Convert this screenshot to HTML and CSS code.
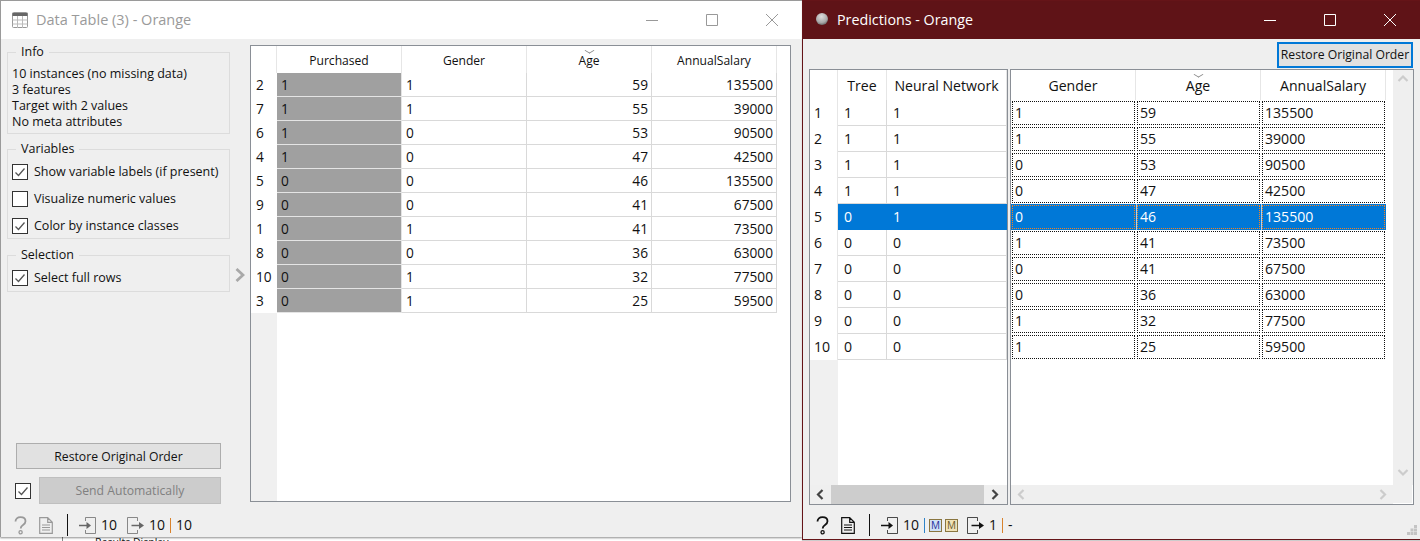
FILE: index.html
```html
<!DOCTYPE html>
<html lang="en">
<head>
    <meta charset="UTF-8">
    <title>Orange</title>
    <link rel="stylesheet" href="styles.css">
</head>
<body>
    <svg class="defs" width="0" height="0">
        <symbol id="i-help" viewBox="0 0 13 19"><path d="M1.500 5.500C1.500 2.800 3.500 1.200 6.500 1.200s5 1.600 5 4.100c0 1.900-1.100 2.800-2.500 3.700-1.500 1-2.300 1.800-2.300 3.600" fill="none" stroke="currentColor" stroke-width="1.800"/><circle cx="6.600" cy="16.300" r="1.600" fill="none" stroke="currentColor" stroke-width="1.300"/></symbol>
        <symbol id="i-doc" viewBox="0 0 14 17"><path d="M.7.700h8l4.600 4.600v11H.7zM8.700.700v4.600h4.600M3 8h8M3 10.500h8M3 13h8" fill="none" stroke="currentColor" stroke-width="1.200"/></symbol>
        <symbol id="i-in" viewBox="0 0 17 17"><path d="M6.500 4V.5h10v16h-10V13" fill="none" stroke="currentColor" opacity=".75"/><path d="M0 8.500h8" stroke="currentColor" stroke-width="1.500"/><path d="M7.500 5L12 8.500 7.500 12z" fill="currentColor"/></symbol>
        <symbol id="i-out" viewBox="0 0 17 17"><path d="M10.500 4V.5H.5v16h10V13" fill="none" stroke="currentColor" opacity=".75"/><path d="M4.500 8.500h8" stroke="currentColor" stroke-width="1.500"/><path d="M12 5l5 3.500-5 3.500z" fill="currentColor"/></symbol>
        <symbol id="i-check" viewBox="0 0 14 14"><path d="M2.500 7.500l3 3 6-7" fill="none" stroke="#555" stroke-width="1.300"/></symbol>
    </svg>

    <!-- what shows of the desktop under the windows -->
    <div class="desktop-line"></div>
    <div class="desktop-label">Results Display</div>

    <!-- Data Table window -->
    <div class="window data-window">
        <div class="titlebar">
            <svg class="app-icon" width="16" height="16" viewBox="0 0 16 16"><rect x=".5" y=".5" width="15" height="15" rx="1" fill="#fff" stroke="#999"/><path d="M.5 1h15v3H.5z" fill="#666"/><path d="M.5 8h15M.5 12h15M5.500 4v12M10.500 4v12" stroke="#bbb"/></svg>
            <span class="title">Data Table (3) - Orange</span>
            <div class="win-buttons">
                <span class="win-btn"><svg width="12" height="12" viewBox="0 0 12 12"><path d="M0 6.500h12" stroke="currentColor"/></svg></span>
                <span class="win-btn"><svg width="12" height="12" viewBox="0 0 12 12"><path d="M.5.500h11v11H.5z" fill="none" stroke="currentColor"/></svg></span>
                <span class="win-btn"><svg width="12" height="12" viewBox="0 0 12 12"><path d="M0 0l12 12M12 0L0 12" stroke="currentColor"/></svg></span>
            </div>
        </div>
        <div class="data-body">
            <div class="sidebar">
                <fieldset class="group group-info">
                    <legend>Info</legend>
                    <div class="info-line">10 instances (no missing data)</div>
                    <div class="info-line">3 features</div>
                    <div class="info-line">Target with 2 values</div>
                    <div class="info-line">No meta attributes</div>
                </fieldset>
                <fieldset class="group group-vars">
                    <legend>Variables</legend>
                    <label class="check"><span class="box"><svg><use href="#i-check"/></svg></span>Show variable labels (if present)</label>
                    <label class="check"><span class="box"></span>Visualize numeric values</label>
                    <label class="check"><span class="box"><svg><use href="#i-check"/></svg></span>Color by instance classes</label>
                </fieldset>
                <fieldset class="group group-sel">
                    <legend>Selection</legend>
                    <label class="check"><span class="box"><svg><use href="#i-check"/></svg></span>Select full rows</label>
                </fieldset>
                <div class="spacer"></div>
                <div class="btn restore">Restore Original Order</div>
                <div class="send-row">
                    <span class="box"><svg><use href="#i-check"/></svg></span>
                    <div class="btn send">Send Automatically</div>
                </div>
            </div>
            <div class="handle"><svg width="10" height="14" viewBox="0 0 10 14"><path d="M1.500 1L8 7l-6.500 6" fill="none" stroke="#a8a8a8" stroke-width="2.800"/></svg></div>
            <div class="table-frame data-frame">
                <table class="grid data-grid">
                    <colgroup><col class="c-rowhead"><col class="c-col"><col class="c-col"><col class="c-col"><col class="c-col"></colgroup>
                    <thead><tr><th></th><th>Purchased</th><th>Gender</th><th class="sorted">Age</th><th>AnnualSalary</th></tr></thead>
                    <tbody>
                        <tr><th>2</th><td class="cls">1</td><td>1</td><td class="num">59</td><td class="num">135500</td></tr>
                        <tr><th>7</th><td class="cls">1</td><td>1</td><td class="num">55</td><td class="num">39000</td></tr>
                        <tr><th>6</th><td class="cls">1</td><td>0</td><td class="num">53</td><td class="num">90500</td></tr>
                        <tr><th>4</th><td class="cls">1</td><td>0</td><td class="num">47</td><td class="num">42500</td></tr>
                        <tr><th>5</th><td class="cls">0</td><td>0</td><td class="num">46</td><td class="num">135500</td></tr>
                        <tr><th>9</th><td class="cls">0</td><td>0</td><td class="num">41</td><td class="num">67500</td></tr>
                        <tr><th>1</th><td class="cls">0</td><td>1</td><td class="num">41</td><td class="num">73500</td></tr>
                        <tr><th>8</th><td class="cls">0</td><td>0</td><td class="num">36</td><td class="num">63000</td></tr>
                        <tr><th>10</th><td class="cls">0</td><td>1</td><td class="num">32</td><td class="num">77500</td></tr>
                        <tr><th>3</th><td class="cls">0</td><td>1</td><td class="num">25</td><td class="num">59500</td></tr>
                    </tbody>
                </table>
                <div class="rowhead-rest"></div>
            </div>
        </div>
        <div class="statusbar inactive">
            <svg class="st-help"><use href="#i-help"/></svg>
            <svg class="st-doc"><use href="#i-doc"/></svg>
            <span class="st-sep"></span>
            <svg class="st-io"><use href="#i-in"/></svg>
            <span class="st-num">10</span>
            <svg class="st-io st-out"><use href="#i-out"/></svg>
            <span class="st-num">10</span>
            <span class="st-bar bar-o"></span>
            <span>10</span>
        </div>
    </div>

    <!-- Predictions window -->
    <div class="window pred-window">
        <div class="titlebar dark">
            <span class="orb"></span>
            <span class="title">Predictions - Orange</span>
            <div class="win-buttons">
                <span class="win-btn"><svg width="12" height="12" viewBox="0 0 12 12"><path d="M0 6.500h12" stroke="currentColor"/></svg></span>
                <span class="win-btn"><svg width="12" height="12" viewBox="0 0 12 12"><path d="M.5.500h11v11H.5z" fill="none" stroke="currentColor"/></svg></span>
                <span class="win-btn"><svg width="12" height="12" viewBox="0 0 12 12"><path d="M0 0l12 12M12 0L0 12" stroke="currentColor"/></svg></span>
            </div>
        </div>
        <div class="pred-top"><div class="btn focus">Restore Original Order</div></div>
        <div class="pred-body">
            <div class="table-frame models-frame">
                <div class="scroll-area">
                    <table class="grid big models-grid">
                        <colgroup><col class="m-rowhead"><col class="m-tree"><col class="m-net"></colgroup>
                        <thead><tr><th></th><th>Tree</th><th>Neural Network</th></tr></thead>
                        <tbody>
                            <tr><th>1</th><td>1</td><td>1</td></tr>
                            <tr><th>2</th><td>1</td><td>1</td></tr>
                            <tr><th>3</th><td>1</td><td>1</td></tr>
                            <tr><th>4</th><td>1</td><td>1</td></tr>
                            <tr class="sel"><th>5</th><td>0</td><td>1</td></tr>
                            <tr><th>6</th><td>0</td><td>0</td></tr>
                            <tr><th>7</th><td>0</td><td>0</td></tr>
                            <tr><th>8</th><td>0</td><td>0</td></tr>
                            <tr><th>9</th><td>0</td><td>0</td></tr>
                            <tr><th>10</th><td>0</td><td>0</td></tr>
                        </tbody>
                    </table>
                    <div class="rowhead-rest big-rest"></div>
                </div>
                <div class="hscroll">
                    <svg class="arrow" width="18" height="19" viewBox="0 0 18 19"><path d="M11 5l-4.500 4.500L11 14" fill="none" stroke="#444" stroke-width="2.200"/></svg>
                    <div class="thumb"></div>
                    <svg class="arrow" width="18" height="19" viewBox="0 0 18 19"><path d="M7 5l4.500 4.500L7 14" fill="none" stroke="#444" stroke-width="2.200"/></svg>
                </div>
            </div>
            <div class="table-frame values-frame">
                <div class="values-main">
                    <div class="scroll-area">
                        <table class="grid big values-grid">
                            <colgroup><col class="v-col"><col class="v-col"><col class="v-col"></colgroup>
                            <thead><tr><th>Gender</th><th class="sorted">Age</th><th>AnnualSalary</th></tr></thead>
                            <tbody>
                                <tr><td><i>1</i></td><td><i>59</i></td><td><i>135500</i></td></tr>
                                <tr><td><i>1</i></td><td><i>55</i></td><td><i>39000</i></td></tr>
                                <tr><td><i>0</i></td><td><i>53</i></td><td><i>90500</i></td></tr>
                                <tr><td><i>0</i></td><td><i>47</i></td><td><i>42500</i></td></tr>
                                <tr class="sel"><td><i>0</i></td><td><i>46</i></td><td><i>135500</i></td></tr>
                                <tr><td><i>1</i></td><td><i>41</i></td><td><i>73500</i></td></tr>
                                <tr><td><i>0</i></td><td><i>41</i></td><td><i>67500</i></td></tr>
                                <tr><td><i>0</i></td><td><i>36</i></td><td><i>63000</i></td></tr>
                                <tr><td><i>1</i></td><td><i>32</i></td><td><i>77500</i></td></tr>
                                <tr><td><i>1</i></td><td><i>25</i></td><td><i>59500</i></td></tr>
                            </tbody>
                        </table>
                    </div>
                    <div class="vscroll">
                        <svg width="18" height="18" viewBox="0 0 18 18"><path d="M4.500 11L9 6.500l4.500 4.500" fill="none" stroke="#ccc" stroke-width="2.200"/></svg>
                        <svg width="18" height="18" viewBox="0 0 18 18"><path d="M4.500 7L9 11.500 13.500 7" fill="none" stroke="#ccc" stroke-width="2.200"/></svg>
                    </div>
                </div>
                <div class="hscroll light">
                    <svg class="arrow" width="18" height="19" viewBox="0 0 18 19"><path d="M11 5l-4.500 4.500L11 14" fill="none" stroke="#ccc" stroke-width="2.200"/></svg>
                    <div class="track"></div>
                    <svg class="arrow" width="18" height="19" viewBox="0 0 18 19"><path d="M7 5l4.500 4.500L7 14" fill="none" stroke="#ccc" stroke-width="2.200"/></svg>
                    <div class="corner"></div>
                </div>
            </div>
        </div>
        <div class="statusbar pred-status">
            <svg class="st-help"><use href="#i-help"/></svg>
            <svg class="st-doc"><use href="#i-doc"/></svg>
            <span class="st-sep"></span>
            <svg class="st-io"><use href="#i-in"/></svg>
            <span class="st-num">10</span>
            <span class="st-bar bar-b"></span>
            <span class="m-badge">M</span>
            <span class="m-badge m-tan">M</span>
            <svg class="st-io st-out pred-out"><use href="#i-out"/></svg>
            <span class="st-num">1</span>
            <span class="st-bar bar-o"></span>
            <span>-</span>
        </div>
        <svg class="grip" width="10" height="10" viewBox="0 0 10 10"><path d="M7 0h3v3H7zM3.500 3.500h3v3h-3zM7 3.500h3v3H7zM0 7h3v3H0zM3.500 7h3v3h-3zM7 7h3v3H7z" fill="#c4c4c4"/></svg>
    </div>
</body>
</html>
```

FILE: styles.css
```css
* {
    box-sizing: border-box;
    margin: 0;
    padding: 0;
}

body {
    width: 1420px;
    height: 541px;
    overflow: hidden;
    position: relative;
    background: #fff;
    font: 12.5px/16px "Open Sans", "Noto Sans", sans-serif;
    color: #111;
}

.defs {
    position: absolute;
}

.desktop-line {
    position: absolute;
    left: 62px;
    top: 530px;
    width: 1px;
    height: 11px;
    background: #888;
}

.desktop-label {
    position: absolute;
    left: 95px;
    top: 534px;
    font-size: 10.5px;
}

/* windows on the desktop */
.window {
    position: absolute;
    top: 0;
    display: flex;
    flex-direction: column;
    background: #efefef;
}

.data-window {
    left: 0;
    width: 802px;
    height: 537px;
    border: 1px solid #9a9a9a;
    border-width: 1px 0 0 1px;
    box-shadow: 0 1px 2px rgba(0, 0, 0, .45);
}

.pred-window {
    left: 802px;
    width: 618px;
    height: 540px;
    border: 1px solid #651418;
    border-right: 0;
    box-shadow: 0 1px 1px rgba(0, 0, 0, .2);
}

.titlebar {
    height: 38px;
    flex: none;
    display: flex;
    align-items: center;
    padding-left: 11px;
    background: #fff;
    color: #9a9a9a;
}

.titlebar.dark {
    background: #5f1317;
    color: #fff;
}

.title {
    font-size: 14.5px;
    margin-left: 8px;
}

.dark .title {
    font-size: 14.300px;
    margin-left: 7px;
}

.orb {
    width: 12px;
    height: 12px;
    margin: -3px 2px 0 2px;
    border-radius: 50%;
    background: radial-gradient(circle at 45% 30%, #ddd, #aaa 55%, #333);
}

.win-buttons {
    margin-left: auto;
    display: flex;
}

.win-btn {
    width: 60px;
    display: flex;
    justify-content: center;
    color: #999;
}

.dark .win-btn {
    color: #fff;
}

/* left window */
.data-body {
    flex: 1;
    display: flex;
    min-height: 0;
}

.sidebar {
    width: 223px;
    margin-left: 6px;
    display: flex;
    flex-direction: column;
    padding-top: 5px;
}

.group {
    border: 1px solid #dcdcdc;
    padding: 0 4px;
}

.group legend {
    margin-left: 4px;
    padding: 0 5px;
    line-height: 16px;
}

.group-info {
    padding-top: 6px;
    padding-bottom: 3px;
}

.group-vars {
    margin-top: 7px;
    height: 98px;
}

.group-sel {
    margin-top: 8px;
    height: 45px;
}

.info-line {
    height: 16px;
}

.check {
    display: flex;
    align-items: center;
    height: 27px;
    gap: 6px;
}

.box {
    width: 16px;
    height: 16px;
    flex: none;
    border: 1px solid #333;
    background: #fff;
}

.box svg {
    display: block;
    width: 14px;
    height: 14px;
}

.group .check:first-of-type {
    margin-top: 1px;
}

.spacer {
    flex: 1;
}

.btn {
    display: flex;
    align-items: center;
    justify-content: center;
    font-size: 12.2px;
    white-space: nowrap;
    background: #e1e1e1;
    border: 1px solid #adadad;
}

.restore {
    margin-left: 9px;
    width: 205px;
    height: 26px;
    flex: none;
    padding-top: 1px;
}

.send-row {
    display: flex;
    align-items: center;
    margin: 8px 0 7px 8px;
}

.send {
    margin-left: 8px;
    width: 182px;
    height: 27px;
    padding-top: 1px;
    background: #ccc;
    border-color: #bfbfbf;
    color: #808080;
}

.handle {
    width: 20px;
    display: flex;
    align-items: flex-start;
    justify-content: center;
    padding-top: 229px;
}

.table-frame {
    border: 1px solid #8a8f96;
    background: #fff;
}

.data-frame {
    width: 541px;
    height: 457px;
    margin-top: 6px;
    display: flex;
    flex-direction: column;
}

.grid {
    border-collapse: separate;
    border-spacing: 0;
    table-layout: fixed;
}

.grid th {
    font-weight: normal;
    text-align: center;
    border-right: 1px solid #e6e6e6;
}

.grid td {
    text-align: left;
    padding: 0 3px;
    border-right: 1px solid #d9d9d9;
    border-bottom: 1px solid #d9d9d9;
}

.grid .num {
    text-align: right;
}

.sorted {
    position: relative;
}

/* small sort chevron over the column title */
.sorted::before {
    content: "";
    position: absolute;
    left: 50%;
    top: 1px;
    width: 6px;
    height: 6px;
    margin-left: -3px;
    border: solid #888;
    border-width: 0 1px 1px 0;
    transform: scaleY(.6) rotate(45deg);
}

.data-grid {
    width: 526px;
    font-size: 13.7px;
}

.c-rowhead {
    width: 26px;
}

.c-col {
    width: 125px;
}

.data-grid thead th {
    height: 27px;
    font-size: 12.1px;
    padding-top: 2px;
}

.data-grid tbody th {
    height: 24px;
    background: #fff;
    text-align: left;
    padding-left: 5px;
    border-right: 0;
}

.data-grid td {
    height: 24px;
}

.data-grid .cls {
    background: #a0a0a0;
    padding-left: 4px;
    border-color: #e4e4e4;
}

.data-grid .cls + td {
    padding-left: 4px;
}

.rowhead-rest {
    flex: 1;
    width: 26px;
    background: #f0f0f0;
}

/* right window */
.pred-top {
    height: 30px;
    flex: none;
    display: flex;
    justify-content: flex-end;
    padding: 3px 7px 0 0;
}

.btn.focus {
    width: 136px;
    height: 26px;
    border: 2px solid #0078d7;
}

.pred-body {
    display: flex;
    flex: none;
    margin-left: 6px;
    gap: 2px;
    height: 436px;
}

.pred-body .table-frame {
    display: flex;
    flex-direction: column;
}

.models-frame {
    width: 199px;
}

.values-frame {
    width: 404px;
}

.scroll-area {
    flex: 1;
    min-height: 0;
    display: flex;
    flex-direction: column;
}

.big {
    font-size: 14.1px;
}

.big thead th {
    height: 30px;
    padding-top: 2px;
}

.big tbody th,
.big td {
    height: 26px;
}

.models-grid {
    width: 197px;
}

.m-rowhead {
    width: 28px;
}

.m-tree {
    width: 49px;
}

.m-net {
    width: 120px;
}

.models-grid tbody th {
    text-align: left;
    padding-left: 4px;
    border-right: 1px solid #e6e6e6;
}

.models-grid td {
    padding: 0 7px 0 6px;
}

.big-rest {
    width: 28px;
}

.sel th {
    background: #fff;
}

.sel td {
    background: #0078d7;
    color: #fff;
}

.grid .sel td {
    border-color: #0078d7;
}

.values-main {
    flex: 1;
    display: flex;
    min-height: 0;
}

.values-grid {
    width: 375px;
}

.v-col {
    width: 125px;
}

.values-grid td {
    padding: 0;
    border: 0;
}

/* the item delegate draws a dotted focus rect round every value */
.values-grid td i {
    display: flex;
    align-items: center;
    font-style: normal;
    height: 24px;
    margin: 1px;
    padding-left: 2px;
    border: 1px dotted #111;
}

.values-grid .sel td i {
    border-color: #f58220;
}

.values-grid .sel td + td {
    box-shadow: inset 1px 0 #a9d0f2;
}

.vscroll {
    width: 20px;
    margin-left: auto;
    background: #efefef;
    display: flex;
    flex-direction: column;
    justify-content: space-between;
    align-items: center;
    padding-bottom: 4px;
}

.hscroll {
    height: 19px;
    flex: none;
    display: flex;
    background: #efefef;
}

.hscroll .arrow {
    width: 21px;
    flex: none;
}

.thumb {
    width: 153px;
    background: #cdcdcd;
}

.track {
    flex: 1;
}

.corner {
    width: 20px;
    border: solid #fff;
    border-width: 0 1px 1px 0;
}

.statusbar {
    height: 26px;
    flex: none;
    display: flex;
    align-items: center;
    padding: 2px 0 0 13px;
    font-size: 14px;
    color: #111;
}

.pred-status {
    flex: 1;
    padding-top: 6px;
}

.inactive .st-help,
.inactive .st-doc {
    color: #999;
}

.inactive .st-io {
    color: #666;
}

.st-help {
    width: 13px;
    height: 19px;
}

.st-doc {
    width: 14px;
    height: 17px;
    margin-left: 12px;
}

.st-sep {
    width: 1px;
    height: 22px;
    margin: 0 11px 0 14px;
    background: #111;
}

.st-io {
    width: 17px;
    height: 17px;
}

.st-num {
    margin-left: 5px;
}

.st-out {
    margin-left: 10px;
}

.pred-out {
    margin-left: 9px;
}

.st-bar {
    width: 1px;
    height: 15px;
    margin: 0 5px;
}

.bar-o {
    background: #d9822b;
}

.bar-b {
    background: #2f83c8;
}

.m-badge {
    width: 13px;
    height: 13px;
    display: flex;
    align-items: center;
    justify-content: center;
    font-size: 10px;
    line-height: 10px;
    color: #1f2f9c;
    background: #cfe0f5;
    border: 1px solid #8a7640;
}

.bar-b + .m-badge {
    margin-left: -1px;
}

.m-badge.m-tan {
    margin-left: 3px;
    color: #6b5a2a;
    background: #f0e2b8;
}

.grip {
    position: absolute;
    right: 3px;
    bottom: 4px;
}
```
